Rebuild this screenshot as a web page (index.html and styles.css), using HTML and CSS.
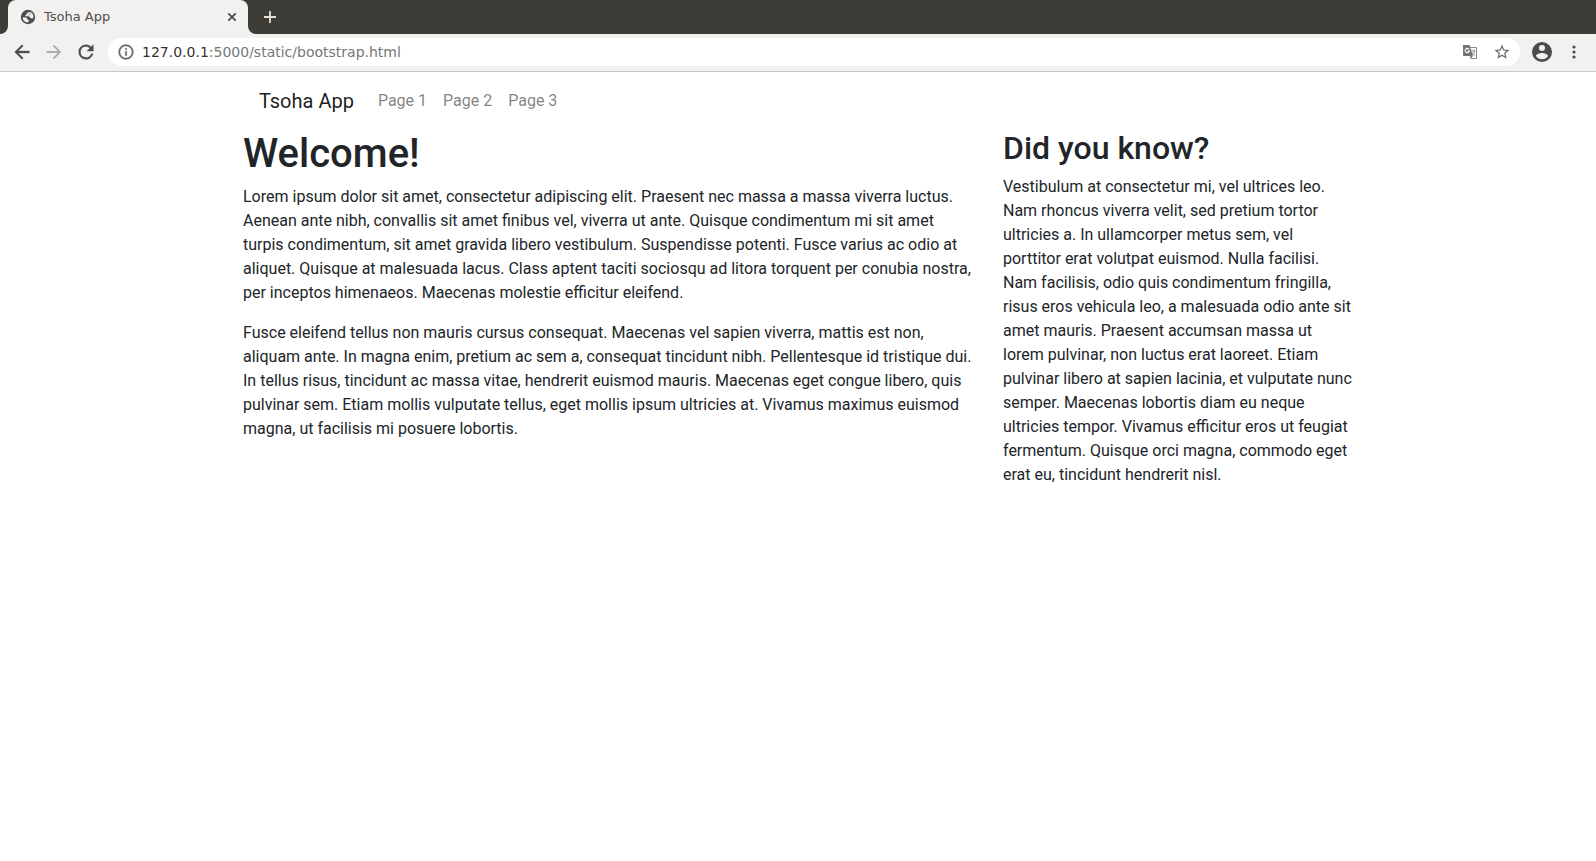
FILE: index.html
```html
<!DOCTYPE html>
<html lang="en">
<head>
<meta charset="utf-8">
<title>Tsoha App</title>
<link rel="stylesheet" href="styles.css">
</head>
<body>
<header class="browser">
  <div class="tabstrip">
    <div class="tab">
      <svg class="favicon" viewBox="0 0 16 16"><circle cx="8" cy="8" r="7.200" fill="#4d4d4d"/><path d="M9.800 2.700C8.800 3.700 6.500 3.500 6.500 5.200 6.300 6.300 5 6.300 5 7.300h3.700c1.300 0 1 2 2.300 2h2.300A5.800 5.800 0 0 0 9.800 2.700zM2.600 8.500h2.900c1.400 0 1.800.9 1.800 1.900 1.400.2 2.300 1 1.500 1.900l-1 1.200A5.700 5.700 0 0 1 2.600 8.500z" fill="#f2f1ef"/><path d="M10.300 3.600c-.2 1.700-1.700 1.800-1.500 3" fill="none" stroke="#4d4d4d" stroke-width=".7"/></svg>
      <span class="tab-title">Tsoha App</span>
      <svg class="close" viewBox="0 0 10 10"><path d="M1.300 1.300l7.400 7.400M8.700 1.300L1.300 8.700" stroke="#4b4b4b" stroke-width="1.700" fill="none"/></svg>
    </div>
    <svg class="new-tab" viewBox="0 0 12 12"><path d="M6 0v12M0 6h12" stroke="#e3dfd3" stroke-width="1.800"/></svg>
  </div>
  <div class="toolbar">
    <svg class="tool" viewBox="0 0 24 24" fill="#4b4b4b"><path d="M20 11H7.830l5.590-5.590L12 4l-8 8 8 8 1.410-1.410L7.830 13H20v-2z" stroke="#4b4b4b" stroke-width=".4"/></svg>
    <svg class="tool" viewBox="0 0 24 24" fill="#ababaa"><path d="M12 4l-1.410 1.410L16.170 11H4v2h12.170l-5.580 5.590L12 20l8-8z"/></svg>
    <svg class="tool" viewBox="0 0 24 24" fill="#4b4b4b"><path d="M17.650 6.350A7.958 7.958 0 0 0 12 4a8 8 0 1 0 7.730 10h-2.080A6 6 0 1 1 12 6c1.660 0 3.140.690 4.220 1.780L13 11h7V4l-2.350 2.350z" stroke="#4b4b4b" stroke-width=".4"/></svg>
    <div class="omnibox">
      <svg class="info" viewBox="0 0 24 24" fill="#6a6a6a"><path d="M11 17h2v-6h-2v6zm1-15a10 10 0 1 0 0 20 10 10 0 0 0 0-20zm0 18a8 8 0 1 1 0-16 8 8 0 0 1 0 16zM11 9h2V7h-2v2z" stroke="#6a6a6a" stroke-width=".4"/></svg>
      <span class="url"><span class="host">127.0.0.1</span>:5000/static/bootstrap.html</span>
      <svg class="translate" viewBox="0 0 16 16"><path d="M8 3.500h6.500v11H8.500" fill="#fff" stroke="#8a8a8a"/><path d="M1 1h6.600l3.400 11H2a1 1 0 0 1-1-1z" fill="#757575"/><path d="M8 12h3l-2.500 2.500z" fill="#757575"/><path d="M7 5.300A2.100 2.100 0 1 0 7.300 7H5.400" fill="none" stroke="#fff" stroke-width="1.100"/><path d="M9.500 6.800h4M11.500 5.800v1M12.800 7c-.4 2-1.400 3.200-2.600 4.200M10.300 8.200c.6 1.500 1.700 2.500 3 3.300" fill="none" stroke="#858585" stroke-width=".9"/></svg>
      <svg class="star" viewBox="0 0 24 24" fill="#6a6a6a"><path d="M22 9.240l-7.190-.620L12 2 9.190 8.630 2 9.240l5.460 4.730L5.820 21 12 17.270 18.180 21l-1.630-7.030L22 9.240zM12 15.400l-3.760 2.270 1-4.280-3.320-2.880 4.380-.380L12 6.100l1.710 4.040 4.380.380-3.320 2.880 1 4.280L12 15.400z"/></svg>
    </div>
    <svg class="account" viewBox="2 2 20 20" fill="#4b4b4b"><path d="M12 2a10 10 0 1 0 0 20 10 10 0 0 0 0-20zm0 3a3 3 0 1 1 0 6 3 3 0 0 1 0-6zm0 14.200a7.200 7.200 0 0 1-6-3.220c.030-1.990 4-3.080 6-3.080 1.990 0 5.970 1.090 6 3.080a7.200 7.200 0 0 1-6 3.220z"/></svg>
    <svg class="dots" viewBox="0 0 4 14" fill="#4b4b4b"><circle cx="2" cy="2" r="1.600"/><circle cx="2" cy="7" r="1.600"/><circle cx="2" cy="12" r="1.600"/></svg>
  </div>
</header>
<div class="container">
  <nav class="navbar">
    <a class="brand">Tsoha App</a>
    <a class="nav-link">Page 1</a>
    <a class="nav-link">Page 2</a>
    <a class="nav-link">Page 3</a>
  </nav>
  <div class="row">
    <main class="main">
      <h1>Welcome!</h1>
      <p>Lorem ipsum dolor sit amet, consectetur adipiscing elit. Praesent nec massa a massa viverra luctus. Aenean ante nibh, convallis sit amet finibus vel, viverra ut ante. Quisque condimentum mi sit amet turpis condimentum, sit amet gravida libero vestibulum. Suspendisse potenti. Fusce varius ac odio at aliquet. Quisque at malesuada lacus. Class aptent taciti sociosqu ad litora torquent per conubia nostra, per inceptos himenaeos. Maecenas molestie efficitur eleifend.</p>
      <p>Fusce eleifend tellus non mauris cursus consequat. Maecenas vel sapien viverra, mattis est non, aliquam ante. In magna enim, pretium ac sem a, consequat tincidunt nibh. Pellentesque id tristique dui. In tellus risus, tincidunt ac massa vitae, hendrerit euismod mauris. Maecenas eget congue libero, quis pulvinar sem. Etiam mollis vulputate tellus, eget mollis ipsum ultricies at. Vivamus maximus euismod magna, ut facilisis mi posuere lobortis.</p>
    </main>
    <aside class="side">
      <h2>Did you know?</h2>
      <p>Vestibulum at consectetur mi, vel ultrices leo. Nam rhoncus viverra velit, sed pretium tortor ultricies a. In ullamcorper metus sem, vel porttitor erat volutpat euismod. Nulla facilisi. Nam facilisis, odio quis condimentum fringilla, risus eros vehicula leo, a malesuada odio ante sit amet mauris. Praesent accumsan massa ut lorem pulvinar, non luctus erat laoreet. Etiam pulvinar libero at sapien lacinia, et vulputate nunc semper. Maecenas lobortis diam eu neque ultricies tempor. Vivamus efficitur eros ut feugiat fermentum. Quisque orci magna, commodo eget erat eu, tincidunt hendrerit nisl.</p>
    </aside>
  </div>
</div>
</body>
</html>
```
FILE: styles.css
```css
* { box-sizing: border-box; }
html { height: 100%; overflow: hidden; }
body {
  margin: 0;
  background: #fff;
  color: #212529;
  font: 400 16px/1.5 Roboto, sans-serif;
}
svg { display: block; flex: none; }

.browser {
  height: 72px;
  border-bottom: 1px solid #c9c9c8;
  background: #f2f1ef;
  font-family: "DejaVu Sans", sans-serif;
}
.tabstrip {
  display: flex;
  align-items: center;
  height: 34px;
  padding-left: 8px;
  background: linear-gradient(#3e3c37 0 10px, #f2f1ef 10px);
  position: relative;
}
.tabstrip::before,
.tabstrip::after {
  content: "";
  position: absolute;
  top: 0;
  height: 34px;
  background: #3e3c37;
}
.tabstrip::before { left: 0; width: 8px; border-bottom-right-radius: 8px; }
.tabstrip::after { left: 248px; right: 0; border-bottom-left-radius: 8px; }
.tab {
  display: flex;
  align-items: center;
  width: 240px;
  height: 34px;
  padding: 0 11px 0 12px;
  border-radius: 8px 8px 0 0;
  background: #f2f1ef;
  z-index: 1;
}
.favicon { width: 16px; height: 16px; }
.tab-title {
  flex: 1;
  margin-left: 8px;
  color: #4d4d4d;
  font-size: 13px;
  line-height: 16px;
}
.close { width: 10px; height: 10px; }
.new-tab { width: 12px; height: 12px; margin-left: 16px; z-index: 1; }

.toolbar {
  display: flex;
  align-items: center;
  height: 36px;
  padding-left: 11px;
}
.tool { width: 22px; height: 22px; margin-right: 10px; }
.omnibox {
  display: flex;
  align-items: center;
  width: 1412px;
  height: 28px;
  margin-left: 1px;
  padding: 0 9px;
  border-radius: 14px;
  background: #fff;
}
.info { width: 18px; height: 18px; }
.url {
  flex: 1;
  margin-left: 7px;
  color: #767676;
  font-size: 14px;
  line-height: 20px;
}
.host { color: #333; }
.translate { width: 16px; height: 16px; }
.star { width: 18px; height: 18px; margin-left: 15px; }
.account { width: 20px; height: 20px; margin-left: 12px; }
.dots { width: 4px; height: 14px; margin-left: 20px; }

.container { width: 1140px; margin: 1px auto 0; padding: 0 15px; }
.navbar { display: flex; align-items: center; height: 56px; padding: 8px 16px; }
.brand { margin-right: 16px; color: rgba(0, 0, 0, .9); font-size: 20px; }
.nav-link { padding: 8px; color: rgba(0, 0, 0, .5); }
.row { display: flex; gap: 30px; }
.main { width: 730px; }
.side { width: 350px; }
h1, h2 { margin: 0 0 8px; font-weight: 500; line-height: 1.2; }
h1 { margin-bottom: 7px; padding-top: 1px; font-size: 40px; }
h2 { font-size: 32px; }
p { margin: 0 0 16px; }
```
